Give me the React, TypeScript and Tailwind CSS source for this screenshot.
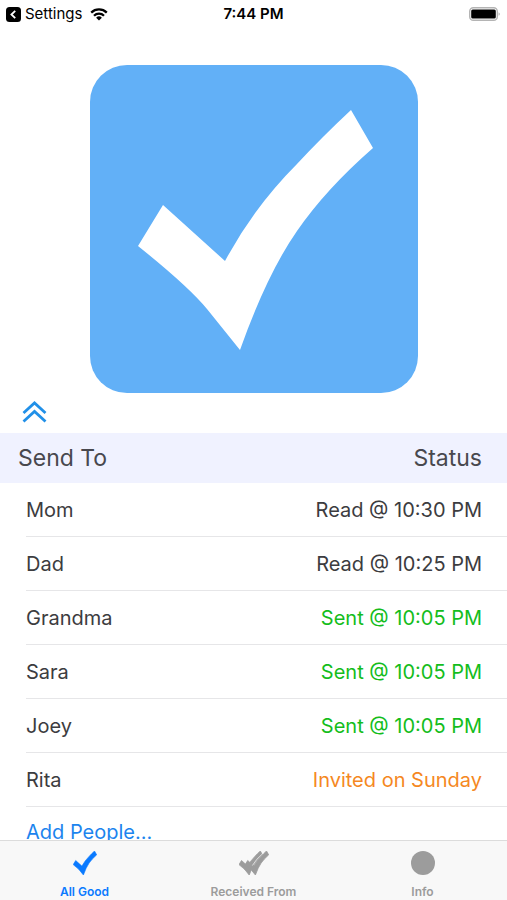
import React, { useState } from 'react'
import clsx from 'clsx'

type StatusKind = 'read' | 'sent' | 'invited'

interface Contact {
  name: string
  status: string
  kind: StatusKind
}

const contacts: Contact[] = [
  { name: 'Mom', status: 'Read @ 10:30 PM', kind: 'read' },
  { name: 'Dad', status: 'Read @ 10:25 PM', kind: 'read' },
  { name: 'Grandma', status: 'Sent @ 10:05 PM', kind: 'sent' },
  { name: 'Sara', status: 'Sent @ 10:05 PM', kind: 'sent' },
  { name: 'Joey', status: 'Sent @ 10:05 PM', kind: 'sent' },
  { name: 'Rita', status: 'Invited on Sunday', kind: 'invited' },
]

const statusColors: Record<StatusKind, string> = {
  read: 'text-[#3c3c40]',
  sent: 'text-[#14bd1c]',
  invited: 'text-[#f5881f]',
}

// shared by the big button and the tab bar icons
const CHECK_PATH =
  'M261 45L283 83Q236 124 207 166Q177 209 150 285L117 244Q98 221 48 181L73 140L135 196Q164 142 207 99Q232 72 261 45Z'

function CheckIcon() {
  return (
    <svg viewBox="48 45 236 240" className="h-6 w-6" fill="currentColor" aria-hidden="true">
      <path d={CHECK_PATH} stroke="currentColor" strokeWidth="6" />
    </svg>
  )
}

function DoubleCheckIcon() {
  return (
    <svg viewBox="48 45 300 240" className="h-6 w-[30px]" fill="currentColor" aria-hidden="true">
      <path d={CHECK_PATH} stroke="currentColor" strokeWidth="8" />
      <path d={CHECK_PATH} transform="translate(62 0)" stroke="currentColor" strokeWidth="8" />
      <path d="M312 52Q240 112 204 176" fill="none" stroke="#f8f8f8" strokeWidth="7" transform="translate(-22 14)" />
    </svg>
  )
}

function DotIcon() {
  return (
    <svg viewBox="0 0 24 24" className="h-6 w-6" fill="currentColor" aria-hidden="true">
      <circle cx="12" cy="12" r="12" />
    </svg>
  )
}

function StatusBar() {
  return (
    <header className="grid h-7 shrink-0 grid-cols-3 items-center px-1.5 text-[15px] text-black">
      <div className="flex items-center gap-2">
        <button className="flex items-center gap-1">
          <svg viewBox="0 0 15 15" className="h-[15px] w-[15px]" aria-hidden="true">
            <rect width="15" height="15" rx="3.5" />
            <path d="M9.2 3.8L5.4 7.5L9.2 11.2" fill="none" stroke="#fff" strokeWidth="1.8" />
          </svg>
          Settings
        </button>
        <svg viewBox="0 0 18 13" className="h-[13px] w-[18px]" role="img" aria-label="Wi-Fi">
          <g fill="none" stroke="currentColor" strokeWidth="2.3">
            <path d="M1.2 4.6A11.2 11.2 0 0 1 16.8 4.6" />
            <path d="M4 7.7A7.1 7.1 0 0 1 14 7.7" />
          </g>
          <path d="M9 12.6L6.1 9.8A4.1 4.1 0 0 1 11.9 9.8Z" fill="currentColor" />
        </svg>
      </div>
      <time className="text-center font-semibold">7:44 PM</time>
      <svg viewBox="0 0 32 14" className="h-3.5 w-8 justify-self-end" role="img" aria-label="Battery full">
        <rect x="0.7" y="0.7" width="27.6" height="12.6" rx="3.6" fill="#fff" stroke="#b4b4b4" strokeWidth="1.4" />
        <rect x="2.2" y="2.5" width="24.6" height="9" rx="1.5" fill="#000" />
        <path d="M29.7 5.2Q31.6 7 29.7 8.8Z" fill="#999" />
      </svg>
    </header>
  )
}

const tabs = [
  { label: 'All Good', icon: <CheckIcon /> },
  { label: 'Received From', icon: <DoubleCheckIcon /> },
  { label: 'Info', icon: <DotIcon /> },
]

export default function App() {
  const [activeTab, setActiveTab] = useState('All Good')

  return (
    <div className="flex h-screen flex-col bg-white font-['Inter',sans-serif]">
      <StatusBar />

      <main className="min-h-0 flex-1 overflow-y-auto [scrollbar-width:none]">
        <div className="flex justify-center px-6 pt-[37px]">
          <button aria-label="Send all good" className="w-82 max-w-full">
            <svg viewBox="0 0 328 328" className="block w-full" aria-hidden="true">
              <rect width="328" height="328" rx="37" fill="#62b0f7" />
              <path d={CHECK_PATH} fill="#fff" />
            </svg>
          </button>
        </div>

        <div className="flex h-10 items-center px-[22px]">
          <button aria-label="Expand list">
            <svg viewBox="0 0 25 24" className="h-6 w-[25px]" fill="none" stroke="#2190e8" strokeWidth="2.8" aria-hidden="true">
              <path d="M1.5 12L12.5 2L23.5 12" />
              <path d="M1.5 20.5L12.5 10.5L23.5 20.5" />
            </svg>
          </button>
        </div>

        <table className="w-full text-xl text-[#3c3c40]">
          <thead className="bg-[#f0f2ff] text-[23px] text-[#48484e]">
            <tr className="h-[50px]">
              <th scope="col" className="pl-[18px] text-left font-normal">Send To</th>
              <th scope="col" className="pr-[25px] text-right font-normal">Status</th>
            </tr>
          </thead>
          <tbody>
            {contacts.map((contact) => (
              <tr key={contact.name}>
                <td className="p-0 pl-[26px]">
                  <div className="flex h-[54px] items-center border-b border-[#e6e6e8]">{contact.name}</div>
                </td>
                <td className="p-0">
                  <div
                    className={clsx(
                      'flex h-[54px] items-center justify-end border-b border-[#e6e6e8] pr-[25px]',
                      statusColors[contact.kind]
                    )}
                  >
                    {contact.status}
                  </div>
                </td>
              </tr>
            ))}
          </tbody>
        </table>
        <button className="flex h-[50px] w-full items-center pl-[26px] text-xl text-[#1c84ee]">
          Add People...
        </button>
      </main>

      <nav className="grid h-[60px] shrink-0 grid-cols-3 border-t border-[#dcdcdc] bg-[#f8f8f8]">
        {tabs.map(({ label, icon }) => (
          <button
            key={label}
            onClick={() => setActiveTab(label)}
            aria-current={activeTab === label ? 'page' : undefined}
            className={clsx(
              'flex flex-col items-center justify-between pt-2.5 text-xs font-semibold',
              activeTab === label ? 'text-[#0a7aff]' : 'text-[#9c9c9c]'
            )}
          >
            {icon}
            {label}
          </button>
        ))}
      </nav>
    </div>
  )
}
